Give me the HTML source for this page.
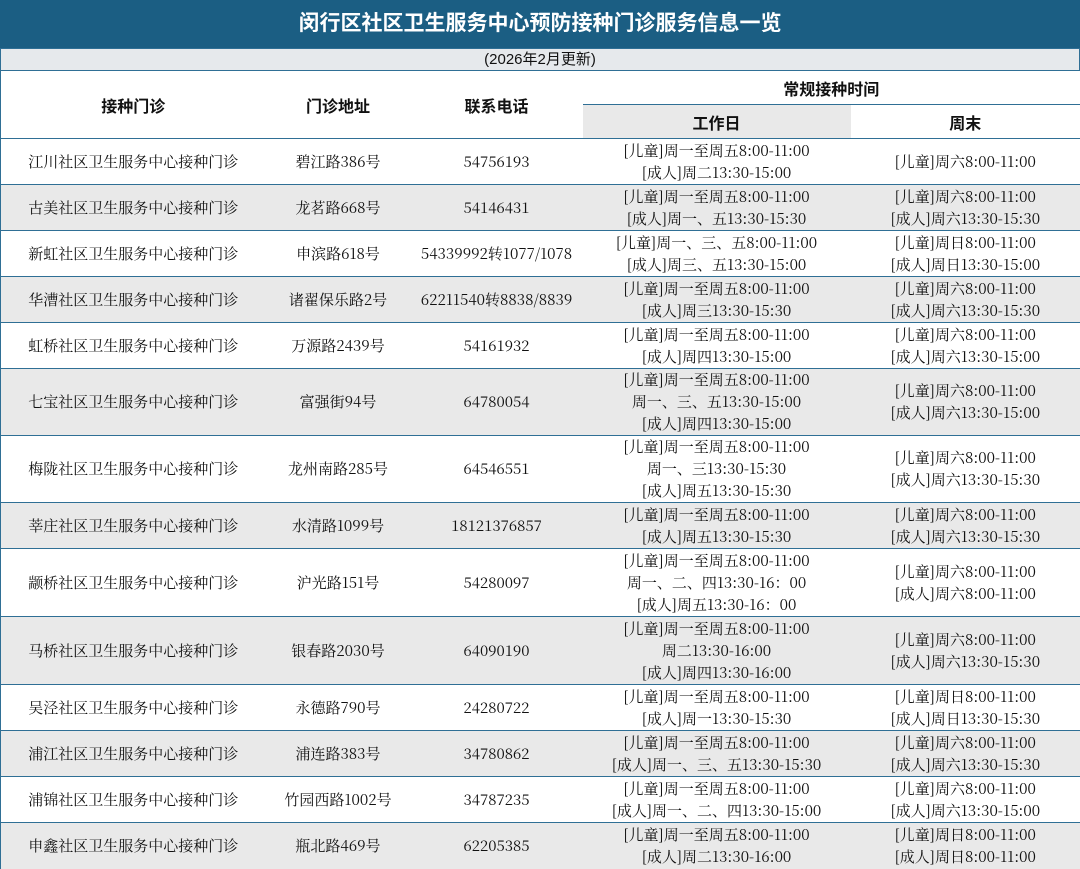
<!DOCTYPE html>
<html><head><meta charset="utf-8"><style>
*{margin:0;padding:0;box-sizing:border-box}
body{width:1080px;height:867px;overflow:hidden;background:#fff;font-family:"Liberation Sans","Noto Sans CJK SC",sans-serif}
.title{height:48px;background:#1b5e83;color:#fff;font-weight:bold;font-size:21px;text-align:center;line-height:48px}
.sub{height:23px;background:#e6e9ec;text-align:center;font-size:15px;line-height:22px;color:#111;border-left:1px solid #2f6f95;border-right:1px solid #2f6f95;border-top:1px solid #2f6f95}
table{border-collapse:collapse;table-layout:fixed;width:1080px}
td{text-align:center;vertical-align:middle;padding:0;font-family:"Noto Serif CJK SC",serif;font-size:15px;line-height:22px;color:#111;white-space:nowrap}
tr{border-top:1.5px solid #2f6f95}
th{font-weight:bold;font-size:16px;color:#111;font-family:"Liberation Sans","Noto Sans CJK SC",sans-serif}
table{border-left:1px solid #2f6f95;border-right:1px solid #2f6f95}
tr.g td{background:#e9e9e9}
</style></head><body>
<div class="title">闵行区社区卫生服务中心预防接种门诊服务信息一览</div>
<div class="sub">(2026年2月更新)</div>
<table style="margin-top:-1px">
<colgroup><col style="width:265px"><col style="width:145px"><col style="width:172px"><col style="width:268px"><col style="width:230px"></colgroup>
<tr style="height:34px"><th rowspan="2">接种门诊</th><th rowspan="2">门诊地址</th><th rowspan="2">联系电话</th><th colspan="2">常规接种时间</th></tr>
<tr style="height:34px;border-top:1px solid #2f6f95"><th style="background:#e9e9e9">工作日</th><th>周末</th></tr>
<tr style="height:46px"><td>江川社区卫生服务中心接种门诊</td><td>碧江路386号</td><td>54756193</td><td>[儿童]周一至周五8:00-11:00<br>[成人]周二13:30-15:00</td><td>[儿童]周六8:00-11:00</td></tr>
<tr class="g" style="height:46px"><td>古美社区卫生服务中心接种门诊</td><td>龙茗路668号</td><td>54146431</td><td>[儿童]周一至周五8:00-11:00<br>[成人]周一、五13:30-15:30</td><td>[儿童]周六8:00-11:00<br>[成人]周六13:30-15:30</td></tr>
<tr style="height:46px"><td>新虹社区卫生服务中心接种门诊</td><td>申滨路618号</td><td>54339992转1077/1078</td><td>[儿童]周一、三、五8:00-11:00<br>[成人]周三、五13:30-15:00</td><td>[儿童]周日8:00-11:00<br>[成人]周日13:30-15:00</td></tr>
<tr class="g" style="height:46px"><td>华漕社区卫生服务中心接种门诊</td><td>诸翟保乐路2号</td><td>62211540转8838/8839</td><td>[儿童]周一至周五8:00-11:00<br>[成人]周三13:30-15:30</td><td>[儿童]周六8:00-11:00<br>[成人]周六13:30-15:30</td></tr>
<tr style="height:46px"><td>虹桥社区卫生服务中心接种门诊</td><td>万源路2439号</td><td>54161932</td><td>[儿童]周一至周五8:00-11:00<br>[成人]周四13:30-15:00</td><td>[儿童]周六8:00-11:00<br>[成人]周六13:30-15:00</td></tr>
<tr class="g" style="height:66px"><td>七宝社区卫生服务中心接种门诊</td><td>富强街94号</td><td>64780054</td><td>[儿童]周一至周五8:00-11:00<br>周一、三、五13:30-15:00<br>[成人]周四13:30-15:00</td><td>[儿童]周六8:00-11:00<br>[成人]周六13:30-15:00</td></tr>
<tr style="height:66px"><td>梅陇社区卫生服务中心接种门诊</td><td>龙州南路285号</td><td>64546551</td><td>[儿童]周一至周五8:00-11:00<br>周一、三13:30-15:30<br>[成人]周五13:30-15:30</td><td>[儿童]周六8:00-11:00<br>[成人]周六13:30-15:30</td></tr>
<tr class="g" style="height:46px"><td>莘庄社区卫生服务中心接种门诊</td><td>水清路1099号</td><td>18121376857</td><td>[儿童]周一至周五8:00-11:00<br>[成人]周五13:30-15:30</td><td>[儿童]周六8:00-11:00<br>[成人]周六13:30-15:30</td></tr>
<tr style="height:68px"><td>颛桥社区卫生服务中心接种门诊</td><td>沪光路151号</td><td>54280097</td><td>[儿童]周一至周五8:00-11:00<br>周一、二、四13:30-16：00<br>[成人]周五13:30-16：00</td><td>[儿童]周六8:00-11:00<br>[成人]周六8:00-11:00</td></tr>
<tr class="g" style="height:68px"><td>马桥社区卫生服务中心接种门诊</td><td>银春路2030号</td><td>64090190</td><td>[儿童]周一至周五8:00-11:00<br>周二13:30-16:00<br>[成人]周四13:30-16:00</td><td>[儿童]周六8:00-11:00<br>[成人]周六13:30-15:30</td></tr>
<tr style="height:46px"><td>吴泾社区卫生服务中心接种门诊</td><td>永德路790号</td><td>24280722</td><td>[儿童]周一至周五8:00-11:00<br>[成人]周一13:30-15:30</td><td>[儿童]周日8:00-11:00<br>[成人]周日13:30-15:30</td></tr>
<tr class="g" style="height:46px"><td>浦江社区卫生服务中心接种门诊</td><td>浦连路383号</td><td>34780862</td><td>[儿童]周一至周五8:00-11:00<br>[成人]周一、三、五13:30-15:30</td><td>[儿童]周六8:00-11:00<br>[成人]周六13:30-15:30</td></tr>
<tr style="height:46px"><td>浦锦社区卫生服务中心接种门诊</td><td>竹园西路1002号</td><td>34787235</td><td>[儿童]周一至周五8:00-11:00<br>[成人]周一、二、四13:30-15:00</td><td>[儿童]周六8:00-11:00<br>[成人]周六13:30-15:00</td></tr>
<tr class="g" style="height:46px"><td>申鑫社区卫生服务中心接种门诊</td><td>瓶北路469号</td><td>62205385</td><td>[儿童]周一至周五8:00-11:00<br>[成人]周二13:30-16:00</td><td>[儿童]周日8:00-11:00<br>[成人]周日8:00-11:00</td></tr>
</table>
</body></html>
